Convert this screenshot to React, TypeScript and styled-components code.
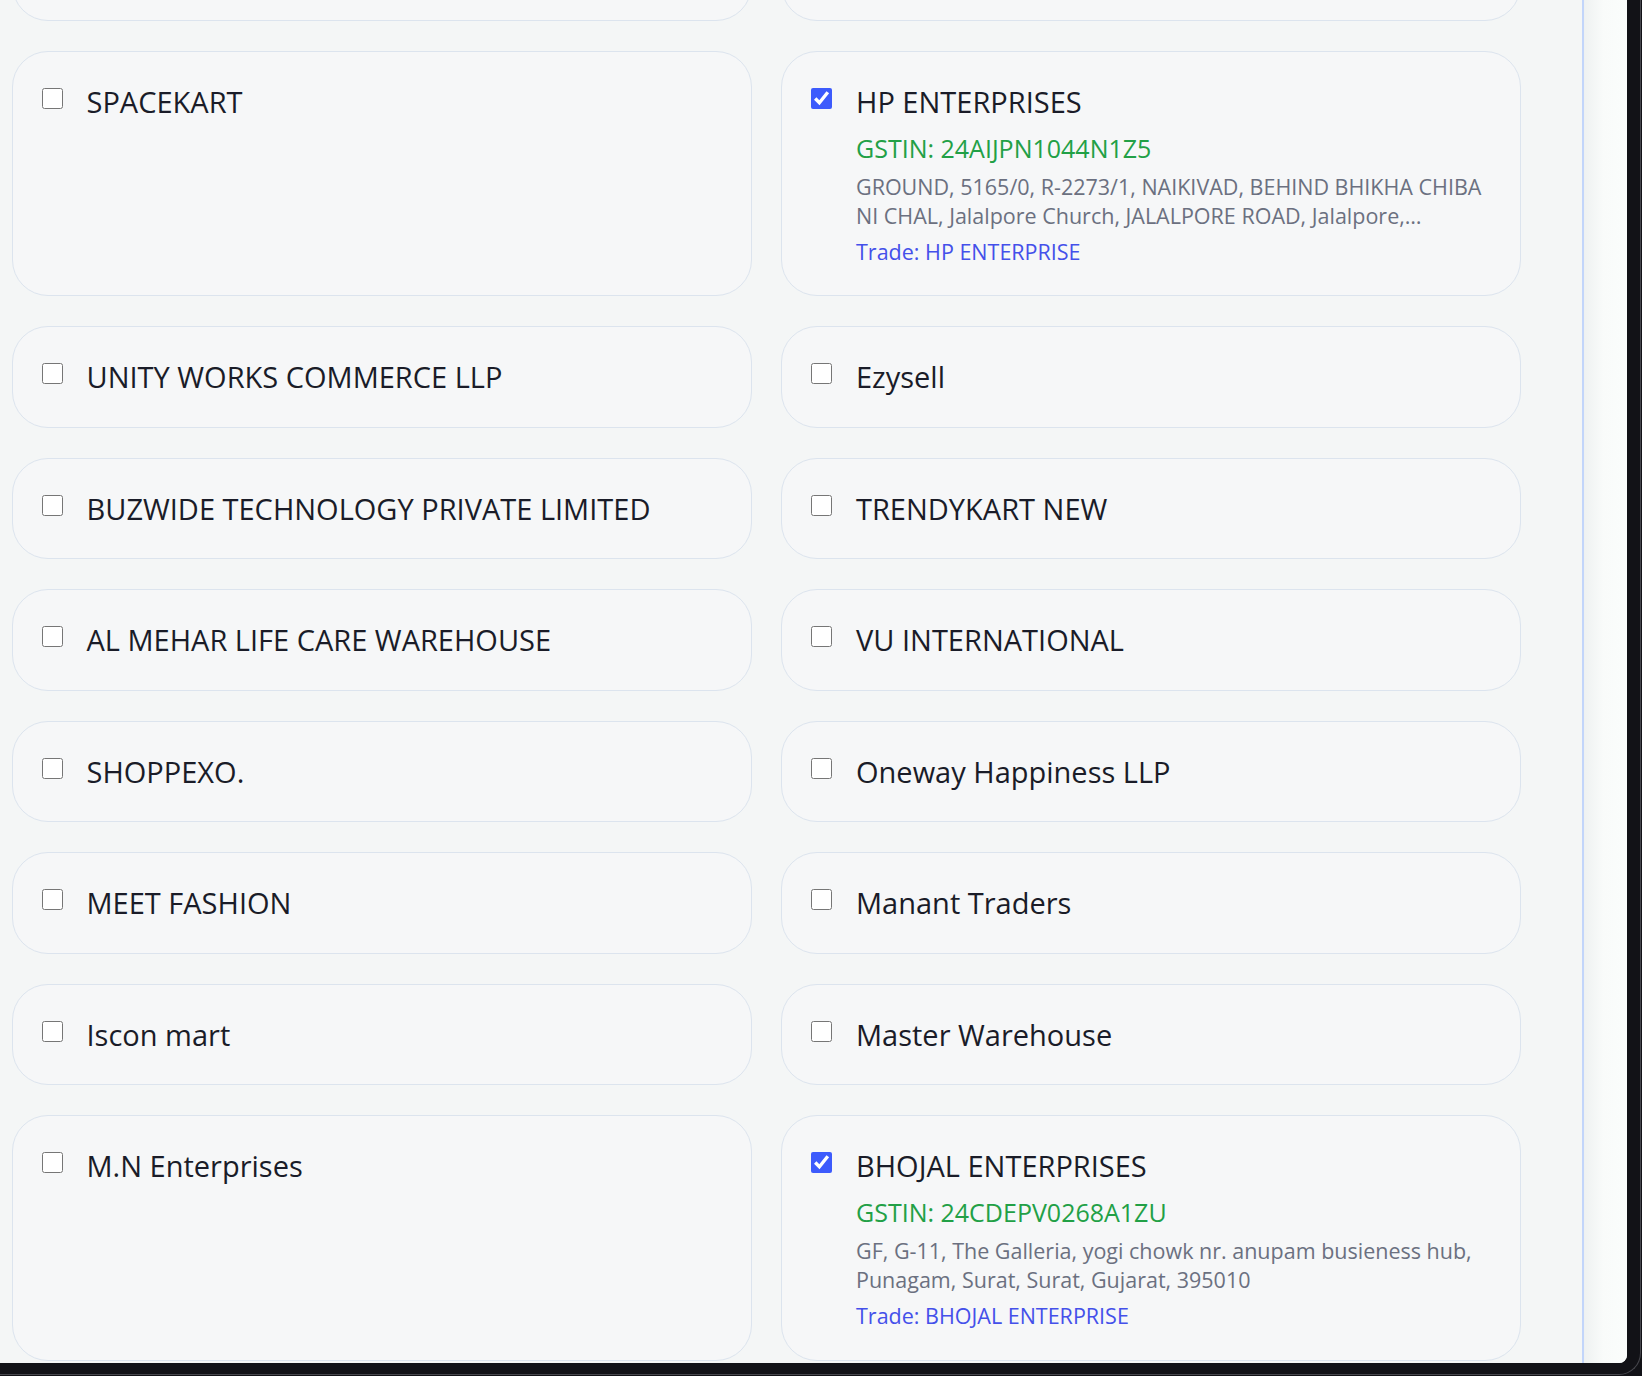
import { useLayoutEffect, useRef } from 'react';
import styled, { createGlobalStyle } from 'styled-components';

interface Party {
    name: string;
    checked?: boolean;
    gstin?: string;
    address?: string;
    trade?: string;
}

const parties: Party[] = [
    { name: 'SHREE TRADERS' },
    { name: 'Krishna Sales' },
    { name: 'SPACEKART' },
    {
        name: 'HP ENTERPRISES',
        checked: true,
        gstin: '24AIJPN1044N1Z5',
        address:
            'GROUND, 5165/0, R-2273/1, NAIKIVAD, BEHIND BHIKHA CHIBA NI CHAL, Jalalpore Church, JALALPORE ROAD, Jalalpore, Navsari, Gujarat, 396421',
        trade: 'HP ENTERPRISE',
    },
    { name: 'UNITY WORKS COMMERCE LLP' },
    { name: 'Ezysell' },
    { name: 'BUZWIDE TECHNOLOGY PRIVATE LIMITED' },
    { name: 'TRENDYKART NEW' },
    { name: 'AL MEHAR LIFE CARE WAREHOUSE' },
    { name: 'VU INTERNATIONAL' },
    { name: 'SHOPPEXO.' },
    { name: 'Oneway Happiness LLP' },
    { name: 'MEET FASHION' },
    { name: 'Manant Traders' },
    { name: 'Iscon mart' },
    { name: 'Master Warehouse' },
    { name: 'M.N Enterprises' },
    {
        name: 'BHOJAL ENTERPRISES',
        checked: true,
        gstin: '24CDEPV0268A1ZU',
        address:
            'GF, G-11, The Galleria, yogi chowk nr. anupam busieness hub, Punagam, Surat, Surat, Gujarat, 395010',
        trade: 'BHOJAL ENTERPRISE',
    },
    { name: 'RADHE CREATION' },
    { name: 'Star Distributors' },
];

const GlobalStyle = createGlobalStyle`
    html, body {
        margin: 0;
        padding: 0;
        background: #121217;
        font-family: "Open Sans", "Noto Sans", sans-serif;
    }
    * {
        box-sizing: border-box;
    }
`;

const Screen = styled.div`
    width: 1642px;
    height: 1376px;
    background: #121217;
    overflow: hidden;
`;

const Frame = styled.div`
    width: 1641px;
    height: 1375px;
    padding: 0 13px 11px 0;
    border-right: 1px solid #47474d;
    border-bottom: 1px solid #47474d;
    border-bottom-right-radius: 22px;
`;

const Panel = styled.div`
    display: flex;
    height: 100%;
    background: #fafcfb;
    border-bottom-right-radius: 8px;
    overflow: hidden;
`;

const ListArea = styled.div`
    flex: 0 0 1584px;
    height: 100%;
    background: #f4f6f6;
    border-right: 2.5px solid #c2d5fa;
    overflow-y: auto;
    scrollbar-width: none;

    &::-webkit-scrollbar {
        display: none;
    }
`;

const SideStrip = styled.div`
    flex: 1;
    background: linear-gradient(to right, #eef1f1, #f9fbfa 45%, #fbfdfc);
`;

const Grid = styled.div`
    display: grid;
    grid-template-columns: repeat(2, 740px);
    column-gap: 29.5px;
    row-gap: 30px;
    padding: 0 0 30px 11.5px;
`;

const Card = styled.label`
    display: flex;
    align-items: flex-start;
    gap: 24px;
    padding: 30px 29px 29.5px 29px;
    background: #f6f7f8;
    border: 1px solid #dce4ee;
    border-radius: 36px;
    cursor: pointer;
`;

const Check = styled.input`
    flex-shrink: 0;
    width: 21px;
    height: 21px;
    margin: 6px 0 0;
    accent-color: #3d5bfc;
`;

const Body = styled.div`
    display: flex;
    flex-direction: column;
    min-width: 0;
`;

const Name = styled.div`
    font-size: 29px;
    line-height: 40px;
    font-weight: 400;
    color: #1a1c28;
`;

const Gstin = styled.div`
    margin-top: 10px;
    font-size: 25px;
    line-height: 32px;
    color: #22a046;
`;

const Address = styled.div`
    margin-top: 8px;
    font-size: 21.5px;
    line-height: 29px;
    color: #6b7080;
    display: -webkit-box;
    -webkit-line-clamp: 2;
    -webkit-box-orient: vertical;
    overflow: hidden;
`;

const Trade = styled.div`
    margin-top: 8px;
    font-size: 21.5px;
    line-height: 28px;
    color: #4450ea;
`;

const PartyCard = ({ party }: { party: Party }) => (
    <Card>
        <Check type="checkbox" defaultChecked={party.checked} />
        <Body>
            <Name>{party.name}</Name>
            {party.checked && party.gstin && (
                <>
                    <Gstin>GSTIN: {party.gstin}</Gstin>
                    <Address>{party.address}</Address>
                    <Trade>Trade: {party.trade}</Trade>
                </>
            )}
        </Body>
    </Card>
);

const App = () => {
    const listRef = useRef<HTMLDivElement>(null);

    // list is scrolled so the first row only peeks in at the top
    useLayoutEffect(() => {
        if (listRef.current) listRef.current.scrollTop = 81;
    }, []);

    return (
        <>
            <GlobalStyle />
            <Screen>
                <Frame>
                    <Panel>
                        <ListArea ref={listRef}>
                            <Grid>
                                {parties.map((p) => (
                                    <PartyCard key={p.name} party={p} />
                                ))}
                            </Grid>
                        </ListArea>
                        <SideStrip />
                    </Panel>
                </Frame>
            </Screen>
        </>
    );
};

export default App;
